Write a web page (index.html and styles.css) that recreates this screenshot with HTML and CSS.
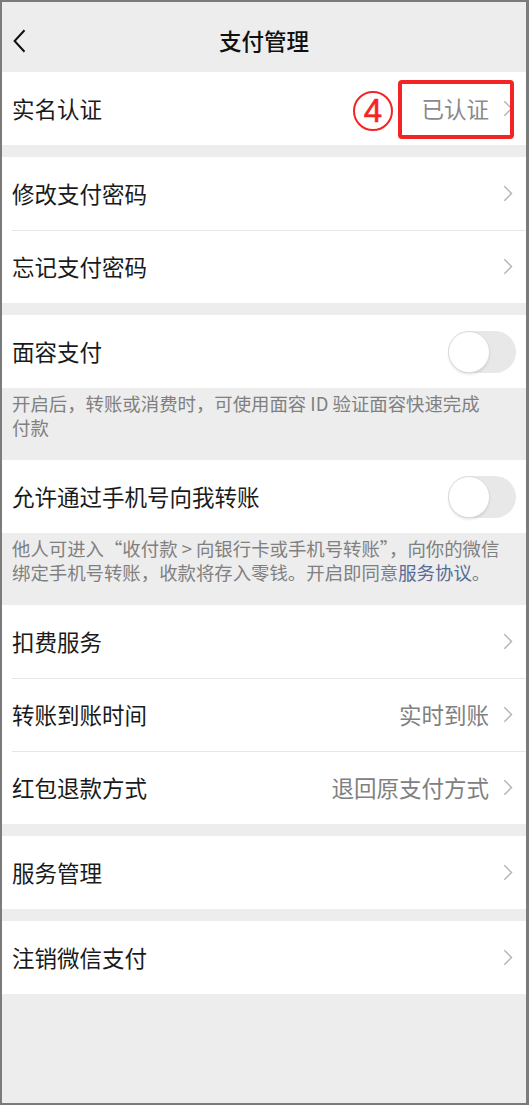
FILE: index.html
```html
<!DOCTYPE html>
<html lang="zh-CN">
<head>
<meta charset="utf-8">
<title>支付管理</title>
<link rel="stylesheet" href="styles.css">
</head>
<body>
<div class="frame">
  <header class="nav">
    <span class="back">
      <svg width="13" height="24" viewBox="0 0 13 24"><path d="M11.5 1.2 L1.6 12 L11.5 22.8" fill="none" stroke="#111" stroke-width="2"/></svg>
    </span>
    <h1 class="title">支付管理</h1>
    <span></span>
  </header>

  <section class="group">
    <div class="row annotated">
      <span class="label">实名认证</span>
      <span class="value value-light">已认证</span>
      <svg class="chev" width="10" height="17" viewBox="0 0 10 17"><path d="M1.3 1.2 L8.5 8.5 L1.3 15.8" fill="none" stroke="#b5b5b5" stroke-width="1.5"/></svg>
      <span class="mark-num">4</span>
      <span class="mark-box"></span>
    </div>
  </section>

  <section class="group">
    <div class="row">
      <span class="label">修改支付密码</span>
      <svg class="chev" width="10" height="17" viewBox="0 0 10 17"><path d="M1.3 1.2 L8.5 8.5 L1.3 15.8" fill="none" stroke="#b5b5b5" stroke-width="1.5"/></svg>
    </div>
    <div class="row">
      <span class="label">忘记支付密码</span>
      <svg class="chev" width="10" height="17" viewBox="0 0 10 17"><path d="M1.3 1.2 L8.5 8.5 L1.3 15.8" fill="none" stroke="#b5b5b5" stroke-width="1.5"/></svg>
    </div>
  </section>

  <section class="group">
    <div class="row">
      <span class="label">面容支付</span>
      <span class="switch"><span class="knob"></span></span>
    </div>
    <div class="desc">
      <span class="line">开启后，转账或消费时，可使用面容 ID 验证面容快速完成</span>
      <span class="line">付款</span>
    </div>
  </section>

  <section class="group flush">
    <div class="row">
      <span class="label">允许通过手机号向我转账</span>
      <span class="switch"><span class="knob"></span></span>
    </div>
    <div class="desc">
      <span class="line">他人可进入“收付款 &gt; 向银行卡或手机号转账”，向你的微信</span>
      <span class="line">绑定手机号转账，收款将存入零钱。开启即同意<span class="link">服务协议</span>。</span>
    </div>
  </section>

  <section class="group flush">
    <div class="row">
      <span class="label">扣费服务</span>
      <svg class="chev" width="10" height="17" viewBox="0 0 10 17"><path d="M1.3 1.2 L8.5 8.5 L1.3 15.8" fill="none" stroke="#b5b5b5" stroke-width="1.5"/></svg>
    </div>
    <div class="row">
      <span class="label">转账到账时间</span>
      <span class="value">实时到账</span>
      <svg class="chev" width="10" height="17" viewBox="0 0 10 17"><path d="M1.3 1.2 L8.5 8.5 L1.3 15.8" fill="none" stroke="#b5b5b5" stroke-width="1.5"/></svg>
    </div>
    <div class="row">
      <span class="label">红包退款方式</span>
      <span class="value">退回原支付方式</span>
      <svg class="chev" width="10" height="17" viewBox="0 0 10 17"><path d="M1.3 1.2 L8.5 8.5 L1.3 15.8" fill="none" stroke="#b5b5b5" stroke-width="1.5"/></svg>
    </div>
  </section>

  <section class="group">
    <div class="row">
      <span class="label">服务管理</span>
      <svg class="chev" width="10" height="17" viewBox="0 0 10 17"><path d="M1.3 1.2 L8.5 8.5 L1.3 15.8" fill="none" stroke="#b5b5b5" stroke-width="1.5"/></svg>
    </div>
  </section>

  <section class="group">
    <div class="row">
      <span class="label">注销微信支付</span>
      <svg class="chev" width="10" height="17" viewBox="0 0 10 17"><path d="M1.3 1.2 L8.5 8.5 L1.3 15.8" fill="none" stroke="#b5b5b5" stroke-width="1.5"/></svg>
    </div>
  </section>
</div>
</body>
</html>
```

FILE: styles.css
```css
html, body {
  margin: 0;
  padding: 0;
}
body {
  font-family: "Noto Sans CJK SC", "Noto Sans", "Liberation Sans", sans-serif;
  color: #1a1a1a;
  background: #ededed;
}
.frame {
  box-sizing: border-box;
  height: 1105px;
  width: 529px;
  border: 2px solid #7b7b7b;
  border-right-width: 3px;
  background: #ededed;
  overflow: hidden;
}
.nav {
  height: 70px;
  box-sizing: border-box;
  padding-top: 7px;
  display: grid;
  grid-template-columns: 1fr auto 1fr;
  align-items: center;
}
.back {
  display: flex;
  align-items: center;
  padding-left: 11px;
}
.title {
  margin: 0;
  font-size: 22.5px;
  font-weight: 500;
  color: #111;
  line-height: 1;
}
.group {
  margin-top: 12px;
}
.nav + .group,
.group.flush {
  margin-top: 0;
}
.row {
  position: relative;
  display: flex;
  align-items: center;
  height: 73px;
  box-sizing: border-box;
  padding: 0 13px 0 10px;
  background: #fff;
}
.row + .row {
  background: linear-gradient(#e6e6e6, #e6e6e6) no-repeat 10px 0 / calc(100% - 10px) 1px, #fff;
}
.label {
  flex: 1;
  font-size: 22.5px;
  line-height: 1;
  color: #1a1a1a;
}
.value {
  font-size: 22.5px;
  line-height: 1;
  color: #808080;
  margin-right: 14px;
}
.value-light {
  color: #8a8a8a;
}
.chev {
  display: block;
  flex: none;
}
.switch {
  flex: none;
  box-sizing: border-box;
  width: 68px;
  height: 42px;
  border-radius: 21px;
  background: #e8e8e9;
  margin-right: -3px;
  padding: 1px;
  display: flex;
  align-items: center;
}
.knob {
  width: 40px;
  height: 40px;
  border-radius: 50%;
  background: #fff;
  box-shadow: 0 0 0 1px #dcdcdc, 0 2px 3px rgba(0, 0, 0, 0.14);
}
.desc {
  box-sizing: border-box;
  height: 72px;
  padding: 4px 10px 0 10px;
  font-size: 18.4px;
  color: #808080;
  white-space: nowrap;
}
.line {
  display: block;
  line-height: 23.5px;
}
.link {
  color: #576b95;
}
.mark-box {
  position: absolute;
  left: 396px;
  top: 8px;
  width: 116px;
  height: 59px;
  box-sizing: border-box;
  border: 4px solid #f52424;
  border-radius: 4px;
}
.mark-num {
  position: absolute;
  left: 351px;
  top: 19px;
  width: 40px;
  height: 40px;
  box-sizing: border-box;
  border: 2.7px solid #f52424;
  border-radius: 50%;
  color: #f52424;
  font-family: "Liberation Sans", "DejaVu Sans", sans-serif;
  font-size: 33px;
  line-height: 35px;
  text-align: center;
  -webkit-text-stroke: 0.6px #f52424;
}
```
